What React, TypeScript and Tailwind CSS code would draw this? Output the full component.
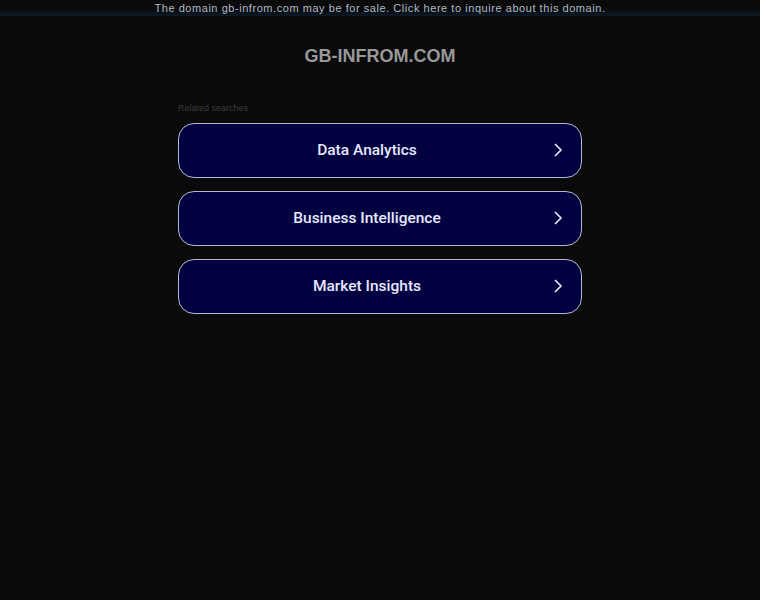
const searches = ["Data Analytics", "Business Intelligence", "Market Insights"];

function Chevron() {
  return (
    <svg width="10" height="14" viewBox="0 0 10 14" fill="none" className="shrink-0">
      <path d="M2.5 1.5 L8 7 L2.5 12.5" stroke="#e6e8ff" strokeWidth="1.7" strokeLinecap="round" strokeLinejoin="round" />
    </svg>
  );
}

export default function App() {
  return (
    <div
      className="min-h-[600px] w-full bg-[#0a0a0a]"
      style={{ fontFamily: "Arial, 'Liberation Sans', sans-serif" }}
    >
      <div className="h-4 w-full bg-gradient-to-b from-[#0a0a0a] from-60% to-[#0b1a2a] flex justify-center">
        <a className="text-[11px] leading-[16px] tracking-[0.55px] text-[#aebac6]">
          The domain gb-infrom.com may be for sale. Click here to inquire about this domain.
        </a>
      </div>

      <h1 className="mt-[27px] text-center text-[18px] font-bold text-[#999999]">
        GB-INFROM.COM
      </h1>

      <div className="mx-auto mt-[32px] w-[404px]">
        <p className="text-[9px] text-[#3a3a3a] mb-[7px] mt-[1px]">Related searches</p>
        <div className="flex flex-col gap-[13px]">
          {searches.map((s) => (
            <a
              key={s}
              className="flex h-[55px] items-center rounded-[16px] border border-[#b4b8d4] bg-[#020240] pl-[2px] pr-[18px]"
            >
              <span
                className="flex-1 pt-[2px] text-center text-[15.5px] font-medium text-[#e6e8ff]"
                style={{ fontFamily: "Roboto, Arial, sans-serif" }}
              >
                {s}
              </span>
              <Chevron />
            </a>
          ))}
        </div>
      </div>
    </div>
  );
}
